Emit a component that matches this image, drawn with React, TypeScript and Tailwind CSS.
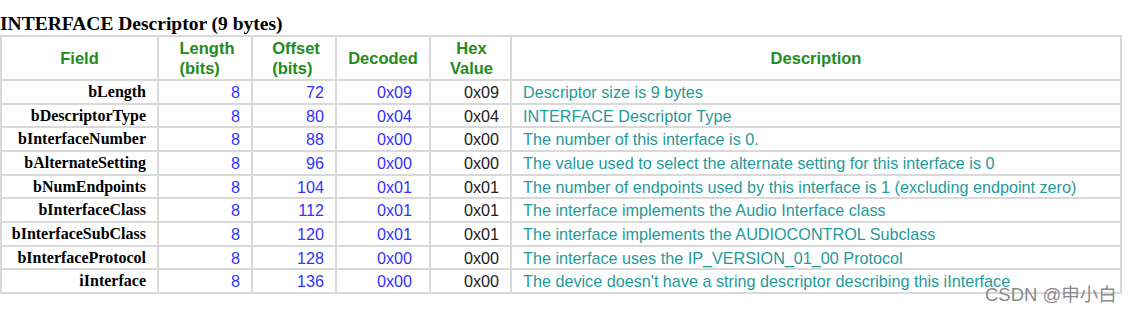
import React from 'react';

type Row = {
  field: string;
  length: string;
  offset: string;
  decoded: string;
  hex: string;
  desc: string;
  h: string;
};

const rows: Row[] = [
  { field: 'bLength', length: '8', offset: '72', decoded: '0x09', hex: '0x09', desc: 'Descriptor size is 9 bytes', h: 'h-[24px]' },
  { field: 'bDescriptorType', length: '8', offset: '80', decoded: '0x04', hex: '0x04', desc: 'INTERFACE Descriptor Type', h: 'h-[23px]' },
  { field: 'bInterfaceNumber', length: '8', offset: '88', decoded: '0x00', hex: '0x00', desc: 'The number of this interface is 0.', h: 'h-[24px]' },
  { field: 'bAlternateSetting', length: '8', offset: '96', decoded: '0x00', hex: '0x00', desc: 'The value used to select the alternate setting for this interface is 0', h: 'h-[24px]' },
  { field: 'bNumEndpoints', length: '8', offset: '104', decoded: '0x01', hex: '0x01', desc: 'The number of endpoints used by this interface is 1 (excluding endpoint zero)', h: 'h-[23px]' },
  { field: 'bInterfaceClass', length: '8', offset: '112', decoded: '0x01', hex: '0x01', desc: 'The interface implements the Audio Interface class', h: 'h-[24px]' },
  { field: 'bInterfaceSubClass', length: '8', offset: '120', decoded: '0x01', hex: '0x01', desc: 'The interface implements the AUDIOCONTROL Subclass', h: 'h-[24px]' },
  { field: 'bInterfaceProtocol', length: '8', offset: '128', decoded: '0x00', hex: '0x00', desc: 'The interface uses the IP_VERSION_01_00 Protocol', h: 'h-[23px]' },
  { field: 'iInterface', length: '8', offset: '136', decoded: '0x00', hex: '0x00', desc: "The device doesn't have a string descriptor describing this iInterface", h: 'h-[24px]' },
];

const cell = 'border-2 border-[#d9d9d9] p-0 leading-[20px]';
const sans = "font-['Liberation_Sans',Arial,sans-serif]";
const serif = "font-['Liberation_Serif','Times_New_Roman',serif]";

export default function App() {
  return (
    <div className="relative h-[312px] w-[1131px] overflow-hidden bg-white">
      <h1 className={`${serif} pt-[12px] text-[19.5px] font-bold leading-[23px] text-black`}>
        INTERFACE Descriptor (9 bytes)
      </h1>
      <table className={`${sans} w-[1122px] table-fixed border-collapse text-[16.2px]`}>
        <colgroup>
          <col className="w-[157px]" />
          <col className="w-[94px]" />
          <col className="w-[84px]" />
          <col className="w-[94px]" />
          <col className="w-[81px]" />
          <col />
        </colgroup>
        <thead>
          <tr className="h-[44px] text-[16.5px] font-bold text-[#228b22]">
            <th className={`${cell} text-center`}>Field</th>
            <th className={`${cell} text-center`}>
              <span className="inline-block pl-[4px] text-left">Length<br />(bits)</span>
            </th>
            <th className={`${cell} text-center`}>
              <span className="inline-block pl-[4px] text-left">Offset<br />(bits)</span>
            </th>
            <th className={`${cell} text-center`}>Decoded</th>
            <th className={`${cell} text-center`}>
              <span className="inline-block pl-[2px]">Hex<br />Value</span>
            </th>
            <th className={`${cell} text-center`}>Description</th>
          </tr>
        </thead>
        <tbody>
          {rows.map((r) => (
            <tr key={r.field} className={r.h}>
              <td className={`${cell} ${serif} pr-[11px] text-right text-[16px] font-bold text-black`}>{r.field}</td>
              <td className={`${cell} pr-[11px] text-right text-[#3333ff]`}>{r.length}</td>
              <td className={`${cell} pr-[11px] text-right text-[#3333ff]`}>{r.offset}</td>
              <td className={`${cell} pr-[17px] text-right text-[#3333ff]`}>{r.decoded}</td>
              <td className={`${cell} pr-[11px] text-right text-[#222]`}>{r.hex}</td>
              <td className={`${cell} whitespace-nowrap pl-[11px] text-left text-[#1f9a9a]`}>{r.desc}</td>
            </tr>
          ))}
        </tbody>
      </table>
      <div className={`${sans} pointer-events-none absolute left-[985px] top-[281px] text-[18.5px] leading-[24px] text-[#8a8a8a]`}>
        CSDN @<span className="font-['Noto_Sans_CJK_SC',sans-serif]">申小白</span>
      </div>
    </div>
  );
}
